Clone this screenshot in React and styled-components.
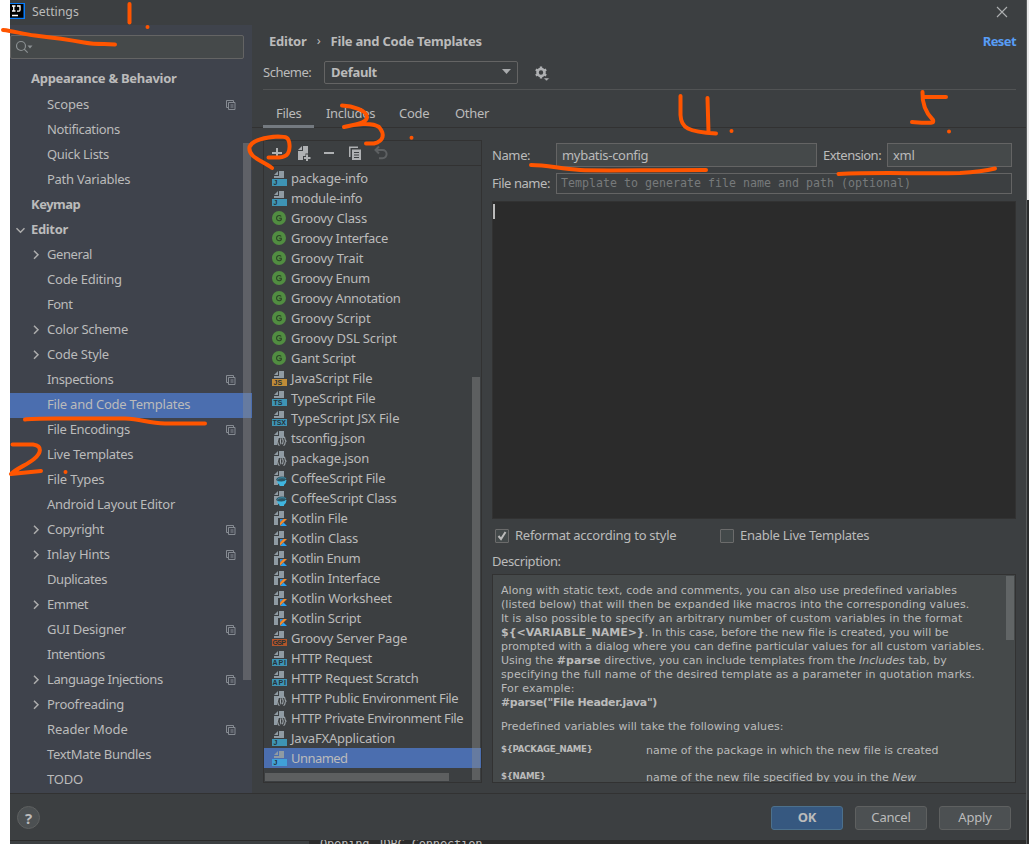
import React from 'react';
import styled, { createGlobalStyle, css } from 'styled-components';

const UI = '"Noto Sans", "Open Sans", sans-serif';
const MONO = '"DejaVu Sans Mono", monospace';

const GlobalStyle = createGlobalStyle`
  * { box-sizing: border-box; }
  body { margin: 0; background: #fff; overflow: hidden; }
`;

const Desktop = styled.div`
  position: relative;
  width: 1029px;
  height: 844px;
  padding-left: 10px;
  display: grid;
  grid-template-columns: 1016px 3px;
  grid-template-rows: 840px 4px;
  overflow: hidden;
  background: #fff;
  font: 13px/20px ${UI};
  color: #bbbbbb;
  white-space: nowrap;
`;

const Dialog = styled.div`
  display: flex;
  flex-direction: column;
  background: #3c3f41;
`;

const RightEdge = styled.div`
  grid-row: span 2;
  background: linear-gradient(#e9e9e9 0 200px, #2b2d2e 200px 720px, #3a3d3f 720px 800px, #2b2b2b 800px);
  border-left: 1px solid #5a5d5e;
`;

const Console = styled.div`
  display: flex;
  height: 4px;
  overflow: hidden;
  background: #2b2b2b;
`;

const ConsoleGutter = styled.div`
  width: 299px;
  border-top: 1px solid #2b2b2b;
  background: #3c3f41;
`;

const ConsoleLine = styled.div`
  padding-left: 11px;
  margin-top: -3px;
  font: 12px/14px ${MONO};
  letter-spacing: -0.17px;
`;

const TitleBar = styled.header`
  display: flex;
  align-items: center;
  height: 25px;
  flex: none;
  font-size: 12.3px;
  padding-right: 18px;
`;

const TitleText = styled.span`
  flex: 1;
  margin-left: 7px;
  margin-top: -2px;
`;

const Body = styled.div`
  display: flex;
  height: 768px;
  flex: none;
`;

const Sidebar = styled.aside`
  display: flex;
  flex-direction: column;
  width: 242px;
  background: #3f434c;
  position: relative;
`;

const Search = styled.div`
  display: flex;
  align-items: center;
  width: 234px;
  height: 24px;
  margin: 10px 0 9px;
  padding-left: 5px;
  border: 1px solid #646464;
  border-radius: 2px;
  background: #45494a;
`;

const TreeRow = styled.div`
  display: flex;
  align-items: center;
  height: 25px;
  flex: none;
  padding-left: ${(p) => (p.$level ? 21 : 5)}px;
  padding-right: 16px;
  padding-bottom: ${(p) => (p.$raised ? 4 : 2)}px;
  background: ${(p) => (p.$selected ? '#4b6eaf' : 'transparent')};
  font-weight: ${(p) => (p.$level ? 400 : 700)};
`;

const Chevron = styled.span`
  display: flex;
  width: 16px;
  flex: none;
`;

const Label = styled.span`
  flex: ${(p) => (p.$grow ? 1 : 'none')};
  margin-top: ${(p) => (p.$grow ? -2 : 0)}px;
  letter-spacing: ${(p) => p.$track || 0}px;
`;

const Thumb = styled.div`
  position: absolute;
  left: ${(p) => p.$x}px;
  top: ${(p) => p.$y}px;
  width: ${(p) => p.$w}px;
  height: ${(p) => p.$h}px;
  background: ${(p) => p.$color || 'rgba(140,140,140,.42)'};
`;

const Main = styled.main`
  display: flex;
  flex-direction: column;
  flex: 1;
`;

const Breadcrumb = styled.div`
  display: flex;
  align-items: center;
  height: 32px;
  padding: 0 10px 0 17px;
  font-weight: 700;
  letter-spacing: -0.23px;
`;

const Separator = styled.span`
  width: 24px;
  text-align: center;
  font-weight: 400;
  margin-top: -2px;
`;

const Reset = styled.a`
  margin-left: auto;
  color: #589df6;
  letter-spacing: -0.6px;
`;

const SchemeRow = styled.div`
  display: flex;
  align-items: center;
  height: 33px;
  margin: 0 10px 0 11px;
  padding-bottom: 2px;
  border-bottom: 1px solid #515354;
`;

const SchemeLabel = styled.span`
  width: 61px;
  letter-spacing: -0.5px;
`;

const Combo = styled.div`
  display: flex;
  align-items: center;
  justify-content: space-between;
  width: 194px;
  height: 23px;
  margin-right: 15px;
  padding: 0 6px 0 6px;
  border: 1px solid #646464;
  border-radius: 2px;
  font-weight: 700;
  letter-spacing: -0.3px;
`;

const Tabs = styled.nav`
  display: flex;
  height: 38px;
  padding-left: 11px;
  border-bottom: 1px solid #323232;
`;

const Tab = styled.div`
  height: 38px;
  width: ${(p) => p.$w}px;
  padding: 13px 0 0 ${(p) => (p.$active ? 13 : 12)}px;
  letter-spacing: -0.3px;
  border-bottom: 3px solid ${(p) => (p.$active ? '#747a80' : 'transparent')};
`;

const Content = styled.div`
  display: flex;
  gap: 10px;
  padding: 12px 10px 10px 11px;
  height: 665px;
`;

const ListPanel = styled.section`
  position: relative;
  width: 219px;
  height: 643px;
  border: 1px solid #323232;
`;

const Toolbar = styled.div`
  display: flex;
  align-items: center;
  gap: 10px;
  height: 25px;
  padding-left: 5px;
  border-bottom: 1px solid #323232;
`;

const TemplateRow = styled.div`
  display: flex;
  align-items: center;
  gap: 4px;
  height: 20px;
  padding-left: 7px;
  background: ${(p) => (p.$selected ? '#4b6eaf' : 'transparent')};
`;

const TemplateList = styled.div`
  padding-top: 2px;
`;

const Form = styled.section`
  display: flex;
  flex-direction: column;
  width: 524px;
`;

const NameRow = styled.div`
  display: flex;
  align-items: center;
  height: ${(p) => (p.$compact ? 21 : 24)}px;
  margin: ${(p) => (p.$compact ? '0' : '3px 4px 6px 0')};
`;

const FieldLabel = styled.span`
  width: ${(p) => p.$w || 64}px;
  padding-left: ${(p) => p.$indent || 0}px;
  letter-spacing: ${(p) => p.$track || 0}px;
  margin-top: -1px;
`;

const Field = styled.div`
  display: flex;
  align-items: center;
  width: ${(p) => p.$w}px;
  height: ${(p) => p.$h}px;
  padding: 0 0 1px 5px;
  border: 1px solid #646464;
  background: #45494a;
  letter-spacing: -0.3px;
  ${(p) =>
    p.$empty &&
    css`
      background: transparent;
      color: #777a7b;
      font: 11.6px/18px ${MONO};
      letter-spacing: 0.02px;
      padding: 0 0 1px 4px;
    `}
`;

const Editor = styled.div`
  height: 318px;
  margin-top: 7px;
  padding: 2px 0 0 0;
  border: 1px solid #323232;
  background: #2b2b2b;
`;

const Caret = styled.div`
  width: 2px;
  height: 15px;
  background: #bbbbbb;
`;

const CheckRow = styled.div`
  display: grid;
  grid-template-columns: 225px auto;
  height: 33px;
  padding-left: 3px;
  align-items: center;
`;

const Check = styled.label`
  display: flex;
  align-items: center;
  gap: 6px;
`;

const CheckText = styled.span`
  margin-top: -2px;
  letter-spacing: -0.26px;
`;

const Box = styled.span`
  display: flex;
  width: 14px;
  height: 14px;
  border: 1px solid #6b6b6b;
  border-radius: 1px;
  background: #43494a;
`;

const DescriptionLabel = styled.div`
  height: 22px;
  line-height: 18px;
  letter-spacing: -0.4px;
`;

const Description = styled.div`
  position: relative;
  height: 209px;
  padding: 9px 0 0 8px;
  border: 1px solid #323232;
  background: #45494a;
  font: 11px/14px "DejaVu Sans", sans-serif;
  overflow: hidden;
`;

const DocLine = styled.div`
  height: 14px;
  margin-top: ${(p) => p.$gap || 0}px;
  letter-spacing: ${(p) => p.$track || 0}px;
`;

const VariableRow = styled.div`
  display: grid;
  grid-template-columns: 145px auto;
  height: 14px;
  margin-top: ${(p) => p.$gap}px;
  letter-spacing: 0.02px;
`;

const VariableName = styled.b`
  font-size: 8.6px;
  line-height: 10px;
  letter-spacing: -0.26px;
`;

const Footer = styled.footer`
  display: flex;
  align-items: center;
  gap: 12px;
  height: 47px;
  padding: 1px 15px 0 7px;
  border-top: 1px solid #323232;
`;

const Help = styled.div`
  display: flex;
  align-items: center;
  justify-content: center;
  width: 23px;
  height: 23px;
  margin-right: auto;
  border: 1px solid #5e6060;
  border-radius: 50%;
  background: #4c5052;
  font: 700 15px/20px ${UI};
`;

const Button = styled.div`
  display: flex;
  align-items: center;
  justify-content: center;
  width: 72px;
  height: 24px;
  padding-bottom: 1px;
  border: 1px solid ${(p) => (p.$primary ? '#4c708c' : '#5e6060')};
  border-radius: 3px;
  background: ${(p) => (p.$primary ? '#365880' : '#4c5052')};
  font-weight: ${(p) => (p.$primary ? 700 : 400)};
  letter-spacing: -0.2px;
`;

const Ink = styled.svg`
  position: absolute;
  left: 0;
  top: 0;
  fill: none;
  stroke: #ff5500;
  stroke-width: 4;
  stroke-linecap: round;
  stroke-linejoin: round;
  pointer-events: none;
`;

const SharedIcon = () => (
  <svg width="10" height="10" viewBox="0 0 10 10" fill="none" stroke="#868b92">
    <path d="M2.5 7.5H.5V.5h7v2M2.5 2.5h6.500v7h-6.500zM4.500 5h3M4.500 7h3" />
  </svg>
);

const Arrow = ({ open }) => (
  <svg width="10" height="12" viewBox="0 0 10 12" fill="none" stroke="#adadad" strokeWidth="1.5">
    {open ? <path d="M1.500 4.200l4 4 4-4" /> : <path d="M3 1.700l4 4-4 4" />}
  </svg>
);

const BADGES = {
  J: '#3e94b5',
  JS: '#c08c38',
  TS: '#3e94b5',
  TSX: '#3e94b5',
  GSP: '#b3552a',
  API: '#3e94b5',
};

const FileIcon = ({ kind, bright }) => {
  if (kind === 'G') {
    return (
      <svg width="16" height="16">
        <circle cx="8" cy="8" r="7" fill="#518d41" />
        <path d="M10.200 6.500A2.600 2.600 0 1 0 10.300 9.600V8.300H8.200" fill="none" stroke="#2c4627" strokeWidth="1.100" />
      </svg>
    );
  }
  const badge = BADGES[kind];
  return (
    <svg width="16" height="16">
      <path d="M7 1L3 5h4z" fill="#8f9ba3" />
      <path d={badge ? 'M8 1v5H3v2h10V1z' : 'M8 1v5H3v9h4V8h6V1z'} fill="#8f9ba3" />
      {badge && <rect x="1" y="9" width="15" height="7" fill={bright ? '#40a0d8' : badge} />}
      {badge && (
        <text
          x={kind.length === 3 ? 1.5 : 2.5}
          y="15"
          fontFamily="Liberation Sans"
          fontWeight="700"
          fontSize="7"
          fill="#263238"
          textLength={kind.length === 3 ? 13.5 : undefined}
        >
          {kind}
        </text>
      )}
      {kind === '{}' && (
        <g>
          <path d="M7 8h8v8H6z" fill="#3c3f41" />
          <g fill="none" stroke="#a0a8ad" strokeWidth="1.100">
            <path d="M8.500 6.800Q7 7 7 9T5.500 11.200Q7 11.200 7 13.200T8.500 15.500M12.500 6.800Q14 7 14 9t1.500 2.200Q14 11.200 14 13.200t-1.500 2.300" />
            <path d="M10 8.300q-1.500 3 0 6M11.500 8.300q1.500 3 0 6" />
          </g>
        </g>
      )}
      {kind === 'cup' && (
        <g>
          <path d="M6 10h9.500q0 3.500-2.500 5v1H8.500v-1Q6 13.500 6 10z" fill="#40b6e0" />
          <path d="M5 10Q6 6.500 11 6.500T15.500 9Q14 11.500 10.500 11.500T5 10z" fill="#2d5664" />
          <path d="M6.500 9.500Q7.500 7.700 11 7.700T15 9" fill="none" stroke="#3f8ba5" />
        </g>
      )}
      {kind === 'K' && (
        <g>
          <path d="M8 8h8v8H8z" fill="#3c3f41" />
          <path d="M9 9h3.500L9 12.500z" fill="#2f8fe0" />
          <path d="M12.500 9H16l-7 7v-3.500z" fill="#f28a2c" />
          <path d="M9 16l3.500-3.500L16 16z" fill="#2ba0ee" />
        </g>
      )}
    </svg>
  );
};

// name, depth, letter spacing, arrow state, project-level mark
const TREE = [
  ['Appearance & Behavior', 0, -0.29],
  ['Scopes', 1, -0.1, '', true],
  ['Notifications', 1, -0.35],
  ['Quick Lists', 1, -0.33],
  ['Path Variables', 1, -0.27],
  ['Keymap', 0, -0.5],
  ['Editor', 0, -0.35, 'open'],
  ['General', 1, -0.42, 'closed'],
  ['Code Editing', 1, -0.22],
  ['Font', 1, -0.5],
  ['Color Scheme', 1, -0.27, 'closed'],
  ['Code Style', 1, -0.2, 'closed'],
  ['Inspections', 1, -0.38, '', true],
  ['File and Code Templates', 1, -0.22],
  ['File Encodings', 1, -0.3, '', true],
  ['Live Templates', 1, -0.28],
  ['File Types', 1, -0.2],
  ['Android Layout Editor', 1, -0.25],
  ['Copyright', 1, -0.33, 'closed', true],
  ['Inlay Hints', 1, -0.2, 'closed', true],
  ['Duplicates', 1, -0.4],
  ['Emmet', 1, -0.5, 'closed'],
  ['GUI Designer', 1, -0.25, '', true],
  ['Intentions', 1, -0.5],
  ['Language Injections', 1, -0.42, 'closed', true],
  ['Proofreading', 1, -0.27, 'closed'],
  ['Reader Mode', 1, -0.1, '', true],
  ['TextMate Bundles', 1, -0.3],
  ['TODO', 1, -0.2],
];

// icon, name, letter spacing
const TEMPLATES = [
  ['J', 'package-info', -0.17],
  ['J', 'module-info', -0.3],
  ['G', 'Groovy Class', -0.17],
  ['G', 'Groovy Interface', -0.3],
  ['G', 'Groovy Trait', -0.12],
  ['G', 'Groovy Enum', -0.3],
  ['G', 'Groovy Annotation', -0.32],
  ['G', 'Groovy Script', -0.15],
  ['G', 'Groovy DSL Script', -0.15],
  ['G', 'Gant Script', -0.3],
  ['JS', 'JavaScript File', -0.15],
  ['TS', 'TypeScript File', -0.23],
  ['TSX', 'TypeScript JSX File', -0.06],
  ['{}', 'tsconfig.json', -0.3],
  ['{}', 'package.json', -0.17],
  ['cup', 'CoffeeScript File', -0.26],
  ['cup', 'CoffeeScript Class', -0.2],
  ['K', 'Kotlin File', -0.27],
  ['K', 'Kotlin Class', -0.25],
  ['K', 'Kotlin Enum', -0.45],
  ['K', 'Kotlin Interface', -0.3],
  ['K', 'Kotlin Worksheet', -0.22],
  ['K', 'Kotlin Script', -0.27],
  ['GSP', 'Groovy Server Page', -0.2],
  ['API', 'HTTP Request', -0.37],
  ['API', 'HTTP Request Scratch', -0.3],
  ['{}', 'HTTP Public Environment File', -0.4],
  ['{}', 'HTTP Private Environment File', -0.41],
  ['J', 'JavaFXApplication', -0.2],
  ['J', 'Unnamed', -0.55],
];

const Logo = () => (
  <svg width="15" height="19" viewBox="0 0 15 19">
    <path d="M0 0h15v16H0z" fill="#087cfa" />
    <path d="M0 1h13.500v13.800H0z" fill="#000" />
    <path d="M2 3h3.500M3.750 3v5M2 8h3.500M7 3h3v4q0 1.200-1.500 1.200H7M2 12.500h6" fill="none" stroke="#fff" strokeWidth="1.300" />
  </svg>
);

const ToolbarIcons = () => (
  <Toolbar>
    <svg width="16" height="16" stroke="#afb1b3" strokeWidth="2"><path d="M8 3v10M3 8h10" /></svg>
    <svg width="16" height="16" fill="#afb1b3">
      <path d="M7 1L3 5h4zM8 1v5H3v9h5v-4h2.500V8.500H13V1zM11 9.500h2v2.500h2.500v2H13v2h-2v-2H9v-2h2z" />
    </svg>
    <svg width="16" height="16" stroke="#afb1b3" strokeWidth="2"><path d="M3 8h10" /></svg>
    <svg width="16" height="16" fill="#afb1b3">
      <path d="M2 1.500h9V3H3.500v9H2zM5 4.500h9V15H5z" />
      <path d="M7 7.500h5M7 10h5M7 12.500h5" stroke="#3c3f41" />
    </svg>
    <svg width="16" height="16" fill="none" stroke="#5d6062" strokeWidth="2">
      <path d="M6 1.500L2.500 5 6 8.500M3 5h6.500a4 4 0 0 1 0 8.200H6" />
    </svg>
  </Toolbar>
);

export default function App() {
  return (
    <Desktop>
      <GlobalStyle />
      <Dialog>
        <TitleBar>
          <Logo />
          <TitleText>Settings</TitleText>
          <svg width="12" height="14" stroke="#aeb0b1" strokeWidth="1.1"><path d="M1 1l10 10M11 1L1 11" /></svg>
        </TitleBar>
        <Body>
          <Sidebar>
            <Search>
              <svg width="18" height="16" fill="none" stroke="#8b9092" strokeWidth="1.2">
                <circle cx="5" cy="7" r="4.5" />
                <path d="M8.200 10.200l3.500 3.500" />
                <path d="M11.500 6.500h5l-2.500 3z" fill="#8b9092" stroke="none" />
              </svg>
            </Search>
            {TREE.map(([name, level, track, arrow, shared], i) => (
              <TreeRow key={name} $level={level} $raised={i === 0} $selected={name === 'File and Code Templates'}>
                <Chevron>{arrow && <Arrow open={arrow === 'open'} />}</Chevron>
                <Label $grow $track={track}>{name}</Label>
                {shared && <SharedIcon />}
              </TreeRow>
            ))}
            <Thumb $x={233} $y={118} $w={8} $h={537} />
          </Sidebar>
          <Main>
            <Breadcrumb>
              <span>Editor</span>
              <Separator>›</Separator>
              <span>File and Code Templates</span>
              <Reset>Reset</Reset>
            </Breadcrumb>
            <SchemeRow>
              <SchemeLabel>Scheme:</SchemeLabel>
              <Combo>
                Default
                <svg width="9" height="6" fill="#a9abad"><path d="M0 0h9L4.500 5z" /></svg>
              </Combo>
              <svg width="18" height="20" fill="none" stroke="#afb1b3">
                <circle cx="8" cy="10.500" r="3.500" strokeWidth="2.600" />
                <path d="M8 4.500v2M8 14.500v2M2.800 7.500l1.700 1M11.500 12.500l1.700 1M2.800 13.500l1.700-1M11.500 8.500l1.700-1" strokeWidth="2.400" />
                <path d="M10.500 16h6L13.500 19z" fill="#afb1b3" stroke="#3c3f41" strokeWidth=".5" />
              </svg>
            </SchemeRow>
            <Tabs>
              <Tab $active $w={51}>Files</Tab>
              <Tab $w={73}>Includes</Tab>
              <Tab $w={56}>Code</Tab>
              <Tab $w={60}>Other</Tab>
            </Tabs>
            <Content>
              <ListPanel>
                <ToolbarIcons />
                <TemplateList>
                  {TEMPLATES.map(([kind, name, track]) => (
                    <TemplateRow key={name} $selected={name === 'Unnamed'}>
                      <FileIcon kind={kind} bright={name === 'Unnamed'} />
                      <Label $track={track}>{name}</Label>
                    </TemplateRow>
                  ))}
                </TemplateList>
                <Thumb $x={208} $y={236} $w={8} $h={403} />
                <Thumb $x={1} $y={632} $w={184} $h={8} />
              </ListPanel>
              <Form>
                <NameRow>
                  <FieldLabel $track={-0.4}>Name:</FieldLabel>
                  <Field $w={261} $h={24}>mybatis-config</Field>
                  <FieldLabel $w={70} $indent={6} $track={-0.5}>Extension:</FieldLabel>
                  <Field $w={125} $h={24}>xml</Field>
                </NameRow>
                <NameRow $compact>
                  <FieldLabel $track={-0.45}>File name:</FieldLabel>
                  <Field $w={456} $h={21} $empty>Template to generate file name and path (optional)</Field>
                </NameRow>
                <Editor><Caret /></Editor>
                <CheckRow>
                  <Check>
                    <Box>
                      <svg width="12" height="12" fill="none" stroke="#bbbbbb" strokeWidth="2"><path d="M2.500 6l2.500 3 4.500-7" /></svg>
                    </Box>
                    <CheckText>Reformat according to style</CheckText>
                  </Check>
                  <Check><Box /><CheckText>Enable Live Templates</CheckText></Check>
                </CheckRow>
                <DescriptionLabel>Description:</DescriptionLabel>
                <Description>
                  <DocLine $track={0.05}>Along with static text, code and comments, you can also use predefined variables</DocLine>
                  <DocLine $track={0.065}>(listed below) that will then be expanded like macros into the corresponding values.</DocLine>
                  <DocLine $track={0.1}>It is also possible to specify an arbitrary number of custom variables in the format</DocLine>
                  <DocLine><b>{'${<VARIABLE_NAME>}'}</b>. In this case, before the new file is created, you will be</DocLine>
                  <DocLine $track={0.02}>prompted with a dialog where you can define particular values for all custom variables.</DocLine>
                  <DocLine>Using the <b>#parse</b> directive, you can include templates from the <i>Includes</i> tab, by</DocLine>
                  <DocLine $track={0.12}>specifying the full name of the desired template as a parameter in quotation marks.</DocLine>
                  <DocLine $track={0.15}>For example:</DocLine>
                  <DocLine $track={-0.35}><b>#parse("File Header.java")</b></DocLine>
                  <DocLine $gap={10} $track={0.07}>Predefined variables will take the following values:</DocLine>
                  <VariableRow $gap={10}>
                    <VariableName>{'${PACKAGE_NAME}'}</VariableName>
                    <span>name of the package in which the new file is created</span>
                  </VariableRow>
                  <VariableRow $gap={13}>
                    <VariableName>{'${NAME}'}</VariableName>
                    <span>name of the new file specified by you in the <i>New</i></span>
                  </VariableRow>
                  <Thumb $x={513} $y={1} $w={8} $h={64} $color="#616566" />
                </Description>
              </Form>
            </Content>
          </Main>
        </Body>
        <Footer>
          <Help>?</Help>
          <Button $primary>OK</Button>
          <Button>Cancel</Button>
          <Button>Apply</Button>
        </Footer>
      </Dialog>
      <RightEdge />
      <Console>
        <ConsoleGutter />
        <ConsoleLine>Opening JDBC Connection</ConsoleLine>
      </Console>
      <Ink width="1029" height="844">
        <path d="M129.500 4v18.500" />
        <path d="M3 30C14 31 22 34 35 35.500S70 40 84 42.500 105 43.500 115 44.500" />
        <path d="M25 419.500C35 417.500 60 419 125 418.500 142 419 148 423.500 165 423.500H205" />
        <path d="M12.500 444.500H33C43 446 41 453 34 459 27 465 17 468 11 474L41 471" />
        <path d="M342 105.500C352 106 367 110 367 117S352 125 344 127C355 124 372 122 379 127 385 134 384 141 374 143.500H366" />
        <path d="M268.500 157.500H279C288 157 290 152 289.500 145 289 137 286 136.500 278 136.500 266 137 252 140 249.500 147 248 157 261 160 272 168" />
        <path d="M680.500 96V115C681 128 688 132 716 133.500M707.500 98L708.500 132" />
        <path d="M531 165C548 165 560 169 580 170 600 171 640 170 706 170" />
        <path d="M922.500 92C922 104 926 113 933 120 935 124 929 123 912 122M924 97L946 97" />
        <path d="M838.500 174C880 172 920 174 960 173 978 172 985 171 995 168.500" />
        <path d="M147.500 27h.01M65.500 472h.01M411.500 137.700h.01M731.500 131h.01M949 131.500h.01" />
      </Ink>
    </Desktop>
  );
}
